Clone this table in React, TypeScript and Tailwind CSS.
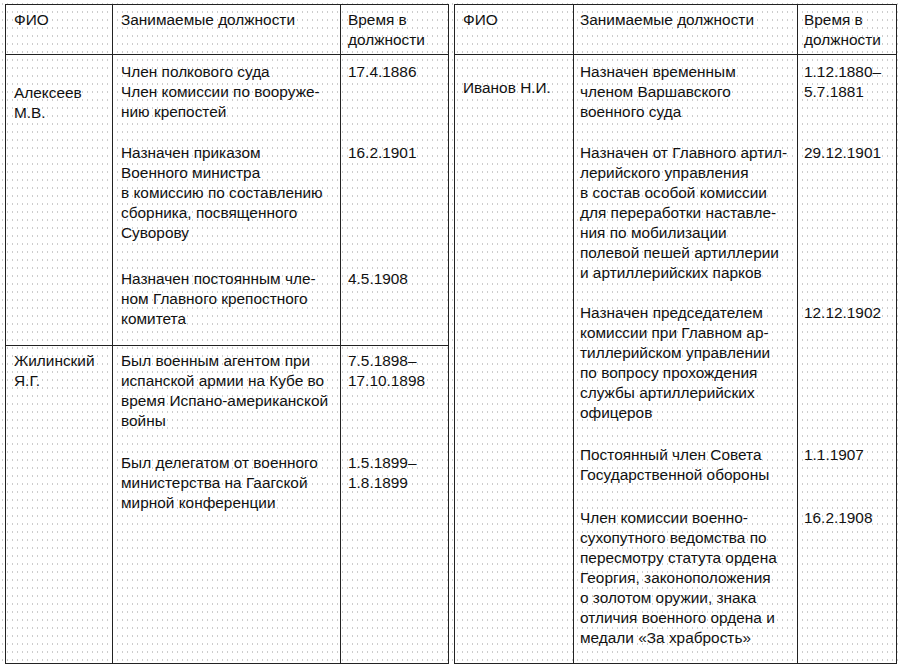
type Entry = { lines: string[]; date: string[]; pt: string };
type Row = { name: string[]; namePt: string; entries: Entry[]; h?: string };

const leftRows: Row[] = [
  {
    name: ["Алексеев", "М.В."],
    namePt: "pt-[28px]",
    h: "h-[291px]",
    entries: [
      { lines: ["Член полкового суда", "Член комиссии по вооруже-", "нию крепостей"], date: ["17.4.1886"], pt: "pt-[7px]" },
      { lines: ["Назначен приказом", "Военного министра", "в комиссию по составлению", "сборника, посвященного", "Суворову"], date: ["16.2.1901"], pt: "pt-[21px]" },
      { lines: ["Назначен постоянным чле-", "ном Главного крепостного", "комитета"], date: ["4.5.1908"], pt: "pt-[26px]" },
    ],
  },
  {
    name: ["Жилинский", "Я.Г."],
    namePt: "pt-[5px]",
    entries: [
      { lines: ["Был военным агентом при", "испанской армии на Кубе во", "время Испано-американской", "войны"], date: ["7.5.1898–", "17.10.1898"], pt: "pt-[5px]" },
      { lines: ["Был делегатом от военного", "министерства на Гаагской", "мирной конференции"], date: ["1.5.1899–", "1.8.1899"], pt: "pt-[22px]" },
    ],
  },
];

const rightRows: Row[] = [
  {
    name: ["Иванов Н.И."],
    namePt: "pt-[23px]",
    entries: [
      { lines: ["Назначен временным", "членом Варшавского", "военного суда"], date: ["1.12.1880–", "5.7.1881"], pt: "pt-[7px]" },
      { lines: ["Назначен от Главного артил-", "лерийского управления", "в состав особой комиссии", "для переработки наставле-", "ния по мобилизации", "полевой пешей артиллерии", "и артиллерийских парков"], date: ["29.12.1901"], pt: "pt-[21px]" },
      { lines: ["Назначен председателем", "комиссии при Главном ар-", "тиллерийском управлении", "по вопросу прохождения", "службы артиллерийских", "офицеров"], date: ["12.12.1902"], pt: "pt-[20px]" },
      { lines: ["Постоянный член Совета", "Государственной обороны"], date: ["1.1.1907"], pt: "pt-[22px]" },
      { lines: ["Член комиссии военно-", "сухопутного ведомства по", "пересмотру статута ордена", "Георгия, законоположения", "о золотом оружии, знака", "отличия военного ордена и", "медали «За храбрость»"], date: ["16.2.1908"], pt: "pt-[23px]" },
    ],
  },
];

function Lines({ lines }: { lines: string[] }) {
  return (
    <>
      {lines.map((l, i) => (
        <div key={i} className="whitespace-nowrap">
          {l}
        </div>
      ))}
    </>
  );
}

function Table({
  rows,
  cols,
  pads,
  width,
}: {
  rows: Row[];
  cols: [string, string];
  pads: [string, string, string];
  width: string;
}) {
  return (
    <div className={`${width} h-[660px] border border-[#222] flex flex-col`}>
      <div className="h-[50px] shrink-0 flex border-b border-[#222]">
        <div className={`${cols[0]} shrink-0 border-r border-[#222] pt-[5px] ${pads[0]}`}>ФИО</div>
        <div className={`${cols[1]} shrink-0 border-r border-[#222] pt-[5px] ${pads[1]}`}>Занимаемые должности</div>
        <div className={`flex-1 pt-[5px] ${pads[2]}`}>
          <div>Время в</div>
          <div>должности</div>
        </div>
      </div>
      {rows.map((row, ri) => (
        <div
          key={ri}
          className={`flex ${row.h ? `${row.h} shrink-0` : "flex-1"} ${ri < rows.length - 1 ? "border-b border-[#222]" : ""}`}
        >
          <div className={`${cols[0]} shrink-0 border-r border-[#222] ${row.namePt} ${pads[0]}`}>
            <Lines lines={row.name} />
          </div>
          <div className="flex-1 flex flex-col">
            {row.entries.map((e, ei) => (
              <div key={ei} className={`flex ${ei === row.entries.length - 1 ? "flex-1" : ""}`}>
                <div className={`${cols[1]} shrink-0 border-r border-[#222] ${e.pt} ${pads[1]}`}>
                  <Lines lines={e.lines} />
                </div>
                <div className={`flex-1 ${e.pt} ${pads[2]}`}>
                  <Lines lines={e.date} />
                </div>
              </div>
            ))}
          </div>
        </div>
      ))}
    </div>
  );
}

export default function App() {
  return (
    <div className="w-[900px] h-[667px] bg-white bg-[radial-gradient(circle,#cdcdcd_0.6px,transparent_0.9px)] bg-[length:5px_8px] font-['Liberation_Sans',Arial,sans-serif] text-[15.4px] leading-[20px] text-[#111]">
      <div className="flex pt-[4px] pl-[5px] gap-[5px]">
        <Table
          rows={leftRows}
          width="w-[444px]"
          cols={["w-[107px]", "w-[228px]"]}
          pads={["pl-[8px]", "pl-[8px]", "pl-[7px]"]}
        />
        <Table
          rows={rightRows}
          width="w-[443px]"
          cols={["w-[119px]", "w-[224px]"]}
          pads={["pl-[8px]", "pl-[6px]", "pl-[6px]"]}
        />
      </div>
    </div>
  );
}
